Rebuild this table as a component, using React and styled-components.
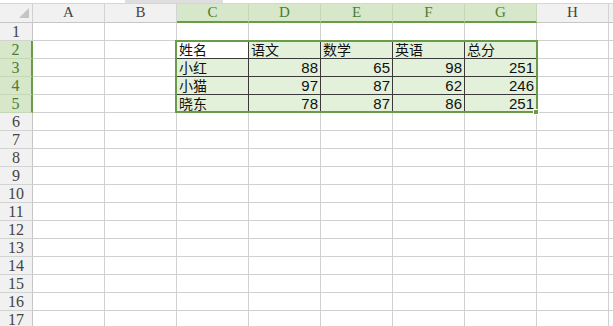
import React from "react";
import styled, { createGlobalStyle } from "styled-components";

const GlobalStyle = createGlobalStyle`
  html, body { margin: 0; padding: 0; background: #ffffff; }
  body { width: 613px; height: 326px; overflow: hidden; }
`;

const ROW_HEAD_W = 33;
const COL_W = 72;
const ROW_H = 18;
const COLUMNS = ["A", "B", "C", "D", "E", "F", "G", "H", ""];
const SEL_COLS = [2, 3, 4, 5, 6];
const SEL_ROWS = [2, 3, 4, 5];

const data = {
  2: ["姓名", "语文", "数学", "英语", "总分"],
  3: ["小红", 88, 65, 98, 251],
  4: ["小猫", 97, 87, 62, 246],
  5: ["晓东", 78, 87, 86, 251],
};

const Sheet = styled.div`
  position: relative;
  width: 613px;
  height: 326px;
  overflow: hidden;
  background: #fff;
  font-family: "Liberation Serif", "Noto Sans CJK SC", serif;
`;

const TopStrip = styled.div`
  display: flex;
  height: 3px;
  border-bottom: 1px solid #d6d6d6;
`;

const StripPart = styled.div`
  width: ${(p) => (p.$w ? `${p.$w}px` : "auto")};
  flex: ${(p) => (p.$w ? "none" : "1")};
  background: ${(p) => (p.$grey ? "#dedede" : "#ffffff")};
`;

const Row = styled.div`
  display: flex;
  height: ${(p) => p.$h}px;
`;

const Corner = styled.div`
  position: relative;
  flex: none;
  width: ${ROW_HEAD_W}px;
  box-sizing: border-box;
  background: #f1f1f1;
  border-right: 1px solid #d0d0d0;
  border-bottom: 1px solid #c6c6c6;
  &::after {
    content: "";
    position: absolute;
    right: 3px;
    bottom: 4px;
    width: 0;
    height: 0;
    border-left: 10px solid transparent;
    border-bottom: 10px solid #c4c4c4;
  }
`;

const ColHead = styled.div`
  flex: none;
  width: ${COL_W}px;
  box-sizing: border-box;
  display: flex;
  align-items: center;
  justify-content: center;
  font-size: 15px;
  padding-bottom: 1px;
  color: ${(p) => (p.$sel ? "#4c7c33" : "#444")};
  background: ${(p) => (p.$sel ? "#d6e7ca" : "#f1f1f1")};
  border-right: 1px solid ${(p) => (p.$sel ? "#c4d8b6" : "#d3d3d3")};
  border-bottom: ${(p) => (p.$sel ? "2px solid #6a9c47" : "1px solid #c6c6c6")};
`;

const RowHead = styled.div`
  flex: none;
  width: ${ROW_HEAD_W}px;
  box-sizing: border-box;
  display: flex;
  align-items: center;
  justify-content: center;
  font-size: 16px;
  line-height: 17px;
  color: ${(p) => (p.$sel ? "#4c7c33" : "#444")};
  background: ${(p) => (p.$sel ? "#d6e7ca" : "#f1f1f1")};
  border-bottom: 1px solid ${(p) => (p.$sel ? "#c4d8b6" : "#d3d3d3")};
  border-right: ${(p) => (p.$sel ? "2px solid #6a9c47" : "1px solid #c6c6c6")};
`;

const Cell = styled.div`
  flex: none;
  width: ${COL_W}px;
  box-sizing: border-box;
  display: flex;
  align-items: center;
  justify-content: ${(p) => (p.$num ? "flex-end" : "flex-start")};
  padding: 0 2px;
  white-space: nowrap;
  font-family: ${(p) =>
    p.$num
      ? `"Liberation Sans", Arial, sans-serif`
      : `"Noto Sans CJK SC", "Liberation Sans", sans-serif`};
  font-size: ${(p) => (p.$num ? "15px" : "14px")};
  line-height: 17px;
  color: #111;
  background: ${(p) => (p.$active ? "#ffffff" : p.$sel ? "#e3f0da" : "#ffffff")};
  border-right: 1px solid ${(p) => (p.$framed ? "#3a3a3a" : "#d0d0d0")};
  border-bottom: 1px solid ${(p) => (p.$framed ? "#3a3a3a" : "#d0d0d0")};
`;

const Selection = styled.div`
  position: absolute;
  left: 175px;
  top: 40px;
  width: 363px;
  height: 73px;
  box-sizing: border-box;
  border: 2px solid #6a9c47;
  pointer-events: none;
`;

const FillHandle = styled.div`
  position: absolute;
  left: 533px;
  top: 109px;
  width: 6px;
  height: 6px;
  box-sizing: border-box;
  background: #6a9c47;
  border: 1px solid #ffffff;
`;

export default function App() {
  const rows = Array.from({ length: 17 }, (_, i) => i + 1);
  return (
    <>
      <GlobalStyle />
      <Sheet>
        <TopStrip>
          <StripPart $w={125} />
          <StripPart $w={98} $grey />
          <StripPart />
        </TopStrip>
        <Row $h={19}>
          <Corner />
          {COLUMNS.map((c, i) => (
            <ColHead key={i} $sel={SEL_COLS.includes(i)}>
              {c}
            </ColHead>
          ))}
        </Row>
        {rows.map((r) => {
          const rowSel = SEL_ROWS.includes(r);
          return (
            <Row key={r} $h={ROW_H}>
              <RowHead $sel={rowSel}>{r}</RowHead>
              {COLUMNS.map((c, ci) => {
                const inSel = rowSel && SEL_COLS.includes(ci);
                const value = inSel ? data[r][ci - 2] : "";
                return (
                  <Cell
                    key={ci}
                    $sel={inSel}
                    $framed={inSel}
                    $active={r === 2 && ci === 2}
                    $num={typeof value === "number"}
                  >
                    {value}
                  </Cell>
                );
              })}
            </Row>
          );
        })}
        <Selection />
        <FillHandle />
      </Sheet>
    </>
  );
}
